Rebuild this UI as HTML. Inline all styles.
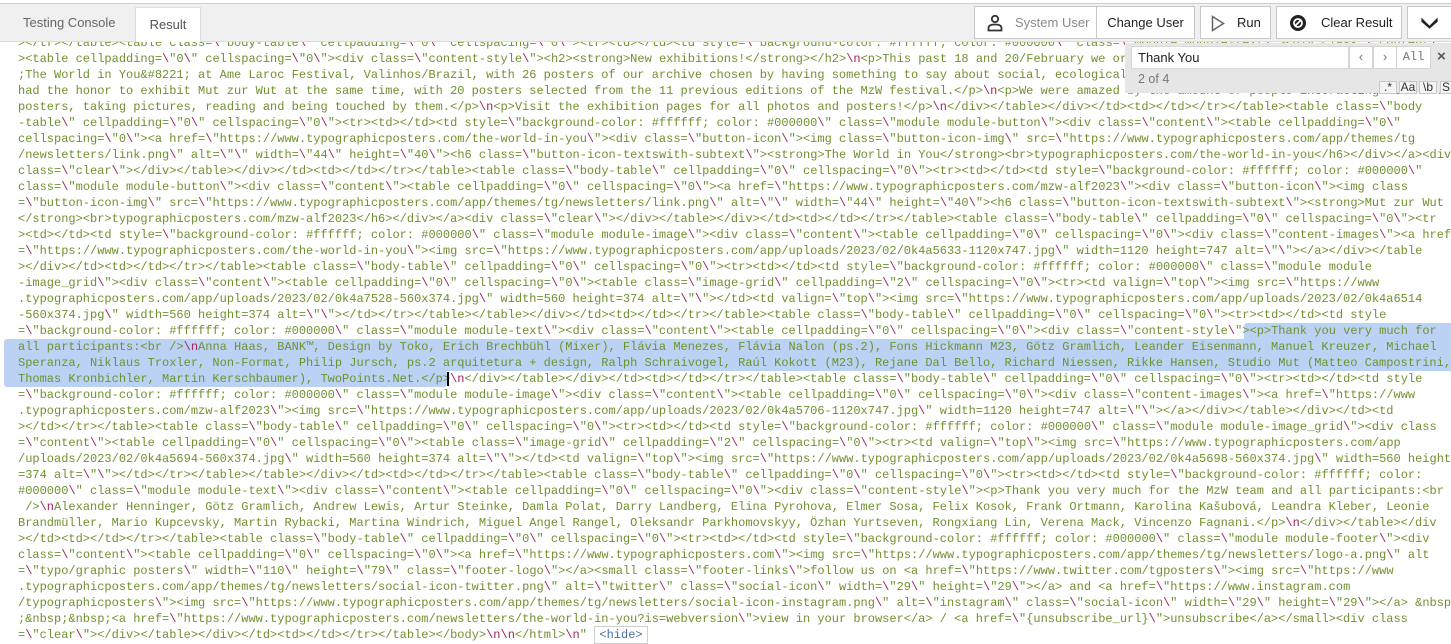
<!DOCTYPE html>
<html><head><meta charset="utf-8">
<style>
html,body{margin:0;padding:0;width:1451px;height:644px;overflow:hidden;background:#fff;}
body{position:relative;font-family:"Liberation Sans",sans-serif;}
#code{position:absolute;left:18px;top:35px;margin:0;font-family:"Liberation Mono",monospace;font-size:12px;line-height:16px;color:#6f922e;white-space:pre;z-index:2;}
#code xmp,#code pre{margin:0;font:inherit;white-space:pre;}
#code i{font-style:normal;color:#a5215f;}
.hl{position:absolute;background:#bcd2f4;z-index:1;}
#hdr{position:absolute;left:0;width:1451px;background:#f0f0f0;border-top:1px solid #cfcfcf;top:3px;height:37px;border-bottom:1px solid #dcdcdc;z-index:5;}
.tab{position:absolute;top:0;height:37px;line-height:37px;font-size:13px;color:#666;}
.btn{position:absolute;top:2px;height:33px;background:#fff;border:1px solid #c8c8c8;box-sizing:border-box;font-size:13px;color:#222;line-height:31px;}
#find{position:absolute;left:1125px;top:43px;width:326px;height:50px;background:#e6e6e6;z-index:6;font-size:13px;}
.fb{position:absolute;background:#fff;border:1px solid #d4d4d4;box-sizing:border-box;text-align:center;color:#777;font-family:"Liberation Mono",monospace;}
.ob{position:absolute;top:38px;height:13px;background:#f4f4f4;border:1px solid #c8c8c8;box-sizing:border-box;font-size:12px;line-height:11px;text-align:center;color:#333;}
</style></head><body>
<div class="hl" style="left:1244px;top:323px;width:207px;height:17px;border-radius:3px 0 0 0;"></div>
<div class="hl" style="left:4px;top:339px;width:1447px;height:32px;border-radius:3px 0 0 0;"></div>
<div class="hl" style="left:4px;top:371px;width:443px;height:16px;border-radius:0 0 3px 3px;"></div>
<div style="position:absolute;left:447px;top:372px;width:2px;height:14px;background:#000;z-index:3"></div>
<div id="code"><xmp id="raw">></tr></table><table class=\"body-table\" cellpadding=\"0\" cellspacing=\"0\"><tr><td></td><td style=\"background-color: #ffffff; color: #000000\" class=\"module module-text\"><div class=\"content\"
><table cellpadding=\"0\" cellspacing=\"0\"><div class=\"content-style\"><h2><strong>New exhibitions!</strong></h2>\n<p>This past 18 and 20/February we organized the exhibition &#8220
;The World in You&#8221; at Ame Laroc Festival, Valinhos/Brazil, with 26 posters of our archive chosen by having something to say about social, ecological and political issues. We
had the honor to exhibit Mut zur Wut at the same time, with 20 posters selected from the 11 previous editions of the MzW festival.</p>\n<p>We were amazed by the amount of people interacting with the
posters, taking pictures, reading and being touched by them.</p>\n<p>Visit the exhibition pages for all photos and posters!</p>\n</div></table></div></td><td></td></tr></table><table class=\"body
-table\" cellpadding=\"0\" cellspacing=\"0\"><tr><td></td><td style=\"background-color: #ffffff; color: #000000\" class=\"module module-button\"><div class=\"content\"><table cellpadding=\"0\"
cellspacing=\"0\"><a href=\"https://www.typographicposters.com/the-world-in-you\"><div class=\"button-icon\"><img class=\"button-icon-img\" src=\"https://www.typographicposters.com/app/themes/tg
/newsletters/link.png\" alt=\"\" width=\"44\" height=\"40\"><h6 class=\"button-icon-textswith-subtext\"><strong>The World in You</strong><br>typographicposters.com/the-world-in-you</h6></div></a><div
class=\"clear\"></div></table></div></td><td></td></tr></table><table class=\"body-table\" cellpadding=\"0\" cellspacing=\"0\"><tr><td></td><td style=\"background-color: #ffffff; color: #000000\"
class=\"module module-button\"><div class=\"content\"><table cellpadding=\"0\" cellspacing=\"0\"><a href=\"https://www.typographicposters.com/mzw-alf2023\"><div class=\"button-icon\"><img class
=\"button-icon-img\" src=\"https://www.typographicposters.com/app/themes/tg/newsletters/link.png\" alt=\"\" width=\"44\" height=\"40\"><h6 class=\"button-icon-textswith-subtext\"><strong>Mut zur Wut
</strong><br>typographicposters.com/mzw-alf2023</h6></div></a><div class=\"clear\"></div></table></div></td><td></td></tr></table><table class=\"body-table\" cellpadding=\"0\" cellspacing=\"0\"><tr
><td></td><td style=\"background-color: #ffffff; color: #000000\" class=\"module module-image\"><div class=\"content\"><table cellpadding=\"0\" cellspacing=\"0\"><div class=\"content-images\"><a href
=\"https://www.typographicposters.com/the-world-in-you\"><img src=\"https://www.typographicposters.com/app/uploads/2023/02/0k4a5633-1120x747.jpg\" width=1120 height=747 alt=\"\"></a></div></table
></div></td><td></td></tr></table><table class=\"body-table\" cellpadding=\"0\" cellspacing=\"0\"><tr><td></td><td style=\"background-color: #ffffff; color: #000000\" class=\"module module
-image_grid\"><div class=\"content\"><table cellpadding=\"0\" cellspacing=\"0\"><table class=\"image-grid\" cellpadding=\"2\" cellspacing=\"0\"><tr><td valign=\"top\"><img src=\"https://www
.typographicposters.com/app/uploads/2023/02/0k4a7528-560x374.jpg\" width=560 height=374 alt=\"\"></td><td valign=\"top\"><img src=\"https://www.typographicposters.com/app/uploads/2023/02/0k4a6514
-560x374.jpg\" width=560 height=374 alt=\"\"></td></tr></table></table></div></td><td></td></tr></table><table class=\"body-table\" cellpadding=\"0\" cellspacing=\"0\"><tr><td></td><td style
=\"background-color: #ffffff; color: #000000\" class=\"module module-text\"><div class=\"content\"><table cellpadding=\"0\" cellspacing=\"0\"><div class=\"content-style\"><p>Thank you very much for
all participants:<br />\nAnna Haas, BANK™, Design by Toko, Erich Brechbühl (Mixer), Flávia Menezes, Flávia Nalon (ps.2), Fons Hickmann M23, Götz Gramlich, Leander Eisenmann, Manuel Kreuzer, Michael
Speranza, Niklaus Troxler, Non-Format, Philip Jursch, ps.2 arquitetura + design, Ralph Schraivogel, Raúl Kokott (M23), Rejane Dal Bello, Richard Niessen, Rikke Hansen, Studio Mut (Matteo Campostrini,
Thomas Kronbichler, Martin Kerschbaumer), TwoPoints.Net.</p>\n</div></table></div></td><td></td></tr></table><table class=\"body-table\" cellpadding=\"0\" cellspacing=\"0\"><tr><td></td><td style
=\"background-color: #ffffff; color: #000000\" class=\"module module-image\"><div class=\"content\"><table cellpadding=\"0\" cellspacing=\"0\"><div class=\"content-images\"><a href=\"https://www
.typographicposters.com/mzw-alf2023\"><img src=\"https://www.typographicposters.com/app/uploads/2023/02/0k4a5706-1120x747.jpg\" width=1120 height=747 alt=\"\"></a></div></table></div></td><td
></td></tr></table><table class=\"body-table\" cellpadding=\"0\" cellspacing=\"0\"><tr><td></td><td style=\"background-color: #ffffff; color: #000000\" class=\"module module-image_grid\"><div class
=\"content\"><table cellpadding=\"0\" cellspacing=\"0\"><table class=\"image-grid\" cellpadding=\"2\" cellspacing=\"0\"><tr><td valign=\"top\"><img src=\"https://www.typographicposters.com/app
/uploads/2023/02/0k4a5694-560x374.jpg\" width=560 height=374 alt=\"\"></td><td valign=\"top\"><img src=\"https://www.typographicposters.com/app/uploads/2023/02/0k4a5698-560x374.jpg\" width=560 height
=374 alt=\"\"></td></tr></table></table></div></td><td></td></tr></table><table class=\"body-table\" cellpadding=\"0\" cellspacing=\"0\"><tr><td></td><td style=\"background-color: #ffffff; color:
#000000\" class=\"module module-text\"><div class=\"content\"><table cellpadding=\"0\" cellspacing=\"0\"><div class=\"content-style\"><p>Thank you very much for the MzW team and all participants:<br
 />\nAlexander Henninger, Götz Gramlich, Andrew Lewis, Artur Steinke, Damla Polat, Darry Landberg, Elina Pyrohova, Elmer Sosa, Felix Kosok, Frank Ortmann, Karolina Kašubová, Leandra Kleber, Leonie
Brandmüller, Mario Kupcevsky, Martin Rybacki, Martina Windrich, Miguel Angel Rangel, Oleksandr Parkhomovskyy, Özhan Yurtseven, Rongxiang Lin, Verena Mack, Vincenzo Fagnani.</p>\n</div></table></div
></td><td></td></tr></table><table class=\"body-table\" cellpadding=\"0\" cellspacing=\"0\"><tr><td></td><td style=\"background-color: #ffffff; color: #000000\" class=\"module module-footer\"><div
class=\"content\"><table cellpadding=\"0\" cellspacing=\"0\"><a href=\"https://www.typographicposters.com\"><img src=\"https://www.typographicposters.com/app/themes/tg/newsletters/logo-a.png\" alt
=\"typo/graphic posters\" width=\"110\" height=\"79\" class=\"footer-logo\"></a><small class=\"footer-links\">follow us on <a href=\"https://www.twitter.com/tgposters\"><img src=\"https://www
.typographicposters.com/app/themes/tg/newsletters/social-icon-twitter.png\" alt=\"twitter\" class=\"social-icon\" width=\"29\" height=\"29\"></a> and <a href=\"https://www.instagram.com
/typographicposters\"><img src=\"https://www.typographicposters.com/app/themes/tg/newsletters/social-icon-instagram.png\" alt=\"instagram\" class=\"social-icon\" width=\"29\" height=\"29\"></a> &nbsp
;&nbsp;&nbsp;<a href=\"https://www.typographicposters.com/newsletters/the-world-in-you?is=webversion\">view in your browser</a> / <a href=\"{unsubscribe_url}\">unsubscribe</a></small><div class
=\"clear\"></div></table></div></td><td></td></tr></table></body>\n\n</html>\n"</xmp></div>
<div style="position:absolute;left:594px;top:626px;width:54px;height:18px;border:1px solid #d0d0d0;box-sizing:border-box;font-family:'Liberation Mono',monospace;font-size:12px;line-height:16px;color:#4a6fa5;text-align:center;background:#fff;z-index:3">&lt;hide&gt;</div>

<div id="hdr">
  <div class="tab" style="left:23px;">Testing Console</div>
  <div style="position:absolute;left:135px;top:3px;width:66px;height:35px;background:#fff;border:1px solid #ddd;border-bottom:none;box-sizing:border-box;font-size:13px;color:#555;line-height:34px;text-align:center;">Result</div>
  <div class="btn" style="left:974px;width:123px;color:#8a8a8a;padding-left:40px;">System User
    <svg style="position:absolute;left:11px;top:7px" width="18" height="18" viewBox="0 0 18 18"><circle cx="9" cy="5" r="3.2" fill="none" stroke="#333" stroke-width="1.8"/><path d="M2.5 16.5v-2.5c0-2 2-3.5 6.5-3.5s6.5 1.5 6.5 3.5v2.5z" fill="none" stroke="#333" stroke-width="1.8"/></svg></div>
  <div class="btn" style="left:1096px;width:99px;text-align:center;">Change User</div>
  <div class="btn" style="left:1200px;width:71px;padding-left:36px;">Run
    <svg style="position:absolute;left:10px;top:8px" width="14" height="17" viewBox="0 0 14 17"><path d="M1.5 1.5L12.5 8.5L1.5 15.5Z" fill="none" stroke="#666" stroke-width="1.5"/></svg></div>
  <div class="btn" style="left:1276px;width:126px;padding-left:44px;">Clear Result
    <svg style="position:absolute;left:12px;top:7px" width="18" height="18" viewBox="0 0 18 18"><circle cx="9" cy="9" r="8" fill="#222"/><circle cx="9" cy="9" r="4" fill="none" stroke="#fff" stroke-width="1.8"/><path d="M11.8 6.2L6.2 11.8" stroke="#fff" stroke-width="1.8"/></svg></div>
  <div class="btn" style="left:1407px;width:46px;">
    <svg style="position:absolute;left:13px;top:10px" width="17" height="12" viewBox="0 0 17 12"><path d="M1 2L8.5 9.5L16 2L16 4.5L8.5 11L1 4.5Z" fill="#222" stroke="#222" stroke-width="1.2"/></svg></div>
</div>

<div id="find">
  <div style="position:absolute;left:6px;top:3px;width:218px;height:23px;background:#fff;border:1px solid #d8d8d8;box-sizing:border-box;font-size:13px;line-height:21px;padding-left:6px;color:#222;">Thank You</div>
  <div class="fb" style="left:224px;top:3px;width:24px;height:23px;line-height:21px;">&#8249;</div>
  <div class="fb" style="left:248px;top:3px;width:24px;height:23px;line-height:21px;">&#8250;</div>
  <div class="fb" style="left:271px;top:3px;width:35px;height:23px;line-height:21px;font-size:12px;">All</div>
  <div style="position:absolute;left:312px;top:5px;font-size:15px;color:#555;font-weight:bold;">&#215;</div>
  <div style="position:absolute;left:13px;top:29px;font-size:12.5px;color:#777;">2 of 4</div>
  <div class="ob" style="left:254px;width:18px;">.*</div>
  <div class="ob" style="left:274px;width:18px;">Aa</div>
  <div class="ob" style="left:294px;width:18px;">\b</div>
  <div class="ob" style="left:315px;width:12px;">S</div>
</div>

<script>
(function(){
  var x=document.getElementById('raw');
  var t=x.textContent;
  var h=t.replace(/&/g,'&amp;').replace(/</g,'&lt;').replace(/>/g,'&gt;');
  h=h.replace(/\\n|\\/g,function(m){return '<i>'+m+'</i>';});
  var p=document.createElement('pre');
  p.innerHTML=h;
  x.parentNode.replaceChild(p,x);
})();
</script>
</body></html>
